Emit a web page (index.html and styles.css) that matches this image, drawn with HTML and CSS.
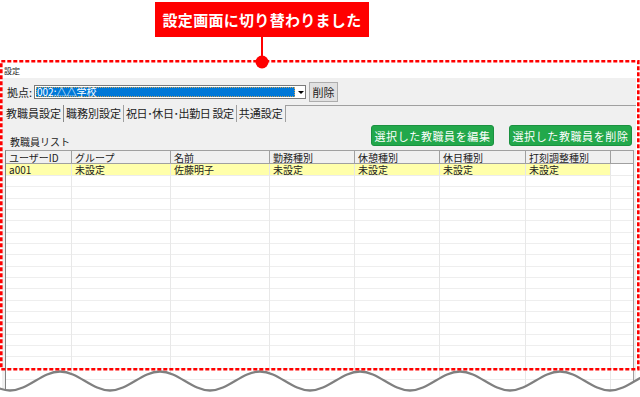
FILE: index.html
```html
<!DOCTYPE html>
<html lang="ja">
<head>
    <meta charset="UTF-8">
    <title>設定</title>
    <link rel="stylesheet" href="styles.css">
</head>
<body>
<div class="callout">
    <div class="callout-label">設定画面に切り替わりました</div>
    <div class="callout-stem"></div>
</div>

<div class="window">
    <div class="window-title">設定</div>
    <div class="panel">
        <div class="toolbar">
            <span class="field-label">拠点:</span>
            <div class="combo">
                <span class="combo-value">002:△△学校</span>
                <span class="combo-arrow"></span>
            </div>
            <button class="btn-sys">削除</button>
        </div>

        <div class="tabs">
            <span class="tab active">教職員設定</span>
            <span class="tab">職務別設定</span>
            <span class="tab tab-long">祝日･休日･出勤日 設定</span>
            <span class="tab">共通設定</span>
            <span class="tabs-rest"></span>
        </div>

        <div class="list-head">
            <span class="list-title">教職員リスト</span>
            <button class="btn-green">選択した教職員を編集</button>
            <button class="btn-green">選択した教職員を削除</button>
        </div>

        <div class="grid">
            <div class="grid-row grid-header">
                <span>ユーザーID</span>
                <span>グループ</span>
                <span>名前</span>
                <span>勤務種別</span>
                <span>休憩種別</span>
                <span>休日種別</span>
                <span>打刻調整種別</span>
                <span></span>
            </div>
            <div class="grid-row grid-data">
                <span>a001</span>
                <span>未設定</span>
                <span>佐藤明子</span>
                <span>未設定</span>
                <span>未設定</span>
                <span>未設定</span>
                <span>未設定</span>
                <span></span>
            </div>
            <!-- 空の行 -->
            <div class="grid-row grid-fill">
                <span></span><span></span><span></span><span></span>
                <span></span><span></span><span></span><span></span>
            </div>
        </div>
    </div>
</div>

<!-- 画面の切れ目 -->
<svg class="wave" width="640" height="32" viewBox="0 0 640 32">
    <path fill="#fff" d="M-40 6.5 C-22 6.5 -8 25.5 10 25.5 S42 6.5 60 6.5 S92 25.5 110 25.5 S142 6.5 160 6.5 S192 25.5 210 25.5 S242 6.5 260 6.5 S292 25.5 310 25.5 S342 6.5 360 6.5 S392 25.5 410 25.5 S442 6.5 460 6.5 S492 25.5 510 25.5 S542 6.5 560 6.5 S592 25.5 610 25.5 S642 6.5 660 6.5 L660 40 L-40 40 Z"/>
    <path fill="none" stroke="#808080" stroke-width="2.3" d="M-40 6.5 C-22 6.5 -8 25.5 10 25.5 S42 6.5 60 6.5 S92 25.5 110 25.5 S142 6.5 160 6.5 S192 25.5 210 25.5 S242 6.5 260 6.5 S292 25.5 310 25.5 S342 6.5 360 6.5 S392 25.5 410 25.5 S442 6.5 460 6.5 S492 25.5 510 25.5 S542 6.5 560 6.5 S592 25.5 610 25.5 S642 6.5 660 6.5"/>
</svg>

<!-- 赤い点線の枠 -->
<svg class="frame" width="640" height="397" viewBox="0 0 640 397">
    <rect x="1.3" y="61.3" width="637" height="308" fill="none" stroke="#f00" stroke-width="2.6" stroke-dasharray="4 2"/>
    <circle cx="262" cy="62" r="6.5" fill="#f00"/>
</svg>
</body>
</html>
```

FILE: styles.css
```css
body{
    margin: 0;
    width: 640px;
    height: 397px;
    overflow: hidden;
    position: relative;
    background-color: #fff;
    color: #222;
    font-family: "Noto Sans CJK JP", "Noto Sans", sans-serif;
}

.callout{
    width: 214px;
    margin-left: 155px;
    padding-top: 2px;
    display: flex;
    flex-direction: column;
    align-items: center;
}
.callout-label{
    width: 100%;
    height: 35px;
    background-color: #f00;
    color: #fff;
    font-size: 15px;
    font-weight: bold;
    letter-spacing: .3px;
    display: flex;
    align-items: center;
    justify-content: center;
}
.callout-stem{
    width: 2px;
    height: 25px;
    background-color: #f00;
}

.window{
    margin-left: 2px;
    width: 634px;
    height: 335px;
    display: flex;
    flex-direction: column;
}
.window-title{
    height: 16px;
    padding-left: 2px;
    font-size: 8px;
    line-height: 17px;
    background-color: #fff;
}
.panel{
    flex: 1;
    background-color: #f0f0f0;
    display: flex;
    flex-direction: column;
    font-size: 11px;
}

.toolbar{
    height: 27px;
    padding-left: 5px;
    display: flex;
    align-items: center;
}
.field-label{
    width: 27px;
}
.combo{
    width: 272px;
    height: 14px;
    box-sizing: border-box;
    border: 1px solid #7a7a7a;
    background-color: #fff;
    padding: 1px 0 1px 1px;
    display: flex;
}
.combo-value{
    flex: 1;
    background-color: #0078d7;
    color: #fff;
    font-size: 10px;
    line-height: 10px;
    padding-left: 1px;
    outline: 1px dotted #c9a25a;
    outline-offset: -1px;
}
.combo-arrow{
    width: 10px;
    position: relative;
}
.combo-arrow:after{
    position: absolute;
    content: '';
    left: 3px;
    top: 4px;
    border-left: 3px solid transparent;
    border-right: 3px solid transparent;
    border-top: 3px solid #000;
}
.btn-sys{
    margin-left: 3px;
    width: 29px;
    height: 20px;
    padding: 0;
    border: 1px solid #adadad;
    background-color: #e1e1e1;
    color: #222;
    font-family: inherit;
    font-size: 11px;
}

.tabs{
    height: 17px;
    padding-left: 2px;
    display: flex;
    line-height: 17px;
}
.tab{
    padding: 0 2px;
    border-right: 1px solid #a0a0a0;
}
.tab.active{
    border-right-color: #888;
}
.tab-long{
    letter-spacing: -.4px;
}
.tabs-rest{
    flex: 1;
    border-top: 1px solid #a0a0a0;
}

.list-head{
    height: 28px;
    box-sizing: border-box;
    padding: 3px 4px 0 8px;
    display: flex;
    align-items: flex-start;
    gap: 15px;
}
.list-title{
    flex: 1;
    margin-top: 10px;
    line-height: 13px;
    font-size: 10px;
}
.btn-green{
    width: 123px;
    height: 21px;
    padding: 0;
    border: 1px solid #1b9140;
    border-radius: 3px;
    background-color: #22a84b;
    color: #fff;
    font-family: inherit;
    font-size: 11px;
    letter-spacing: .6px;
}

.grid{
    flex: 1;
    margin: 0 2px 0 3px;
    border: 1px solid #a0a0a0;
    border-left-color: #808080;
    border-bottom: none;
    background-color: #fff;
    display: flex;
    flex-direction: column;
    font-size: 10px;
}
.grid-row{
    display: grid;
    grid-template-columns: 66px 99px 99px 85px 85px 86px 85px 1fr;
}
.grid-row>span{
    box-sizing: border-box;
    padding-left: 3px;
    white-space: nowrap;
}
.grid-header>span{
    height: 13px;
    line-height: 13px;
    background-color: #f0f0f0;
    border-right: 1px solid #a0a0a0;
    border-bottom: 1px solid #a0a0a0;
}
.grid-header>span:last-child{
    border-right: none;
}
.grid-data>span{
    height: 12px;
    line-height: 12px;
    background-color: #ffffaa;
    border-right: 1px solid #e6e6e6;
    border-bottom: 1px solid #ececec;
}
.grid-data>span:last-child{
    background-color: #fff;
    border-right: none;
}
.grid-fill{
    flex: 1;
}
.grid-fill>span{
    border-right: 1px solid #e8e8e8;
    background: repeating-linear-gradient(#fff 0 10.33px, #eeeeee 10.33px 11.33px);
}
.grid-fill>span:last-child{
    border-right: none;
}

.wave{
    position: absolute;
    left: 0;
    top: 365px;
}
.frame{
    position: absolute;
    left: 0;
    top: 0;
}
```
